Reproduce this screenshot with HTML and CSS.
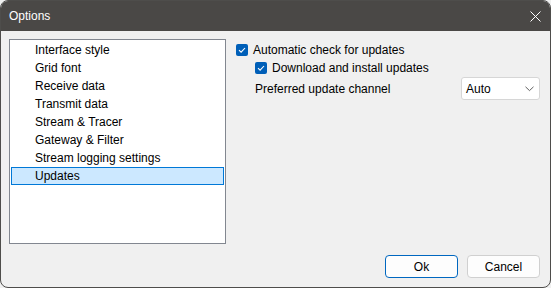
FILE: index.html
```html
<!DOCTYPE html>
<html lang="en">
<head>
  <meta charset="UTF-8" />
  <title>Options</title>
  <link rel="stylesheet" href="styles.css">
</head>
<body>
  <div class="window">
    <div class="titlebar">
      <span class="title">Options</span>
      <svg class="close" width="11" height="11" viewBox="0 0 11 11">
        <path d="M0.5 0.5 L10.5 10.5 M10.5 0.5 L0.5 10.5" stroke="#fff" stroke-width="1" fill="none" />
      </svg>
    </div>

    <div class="body">
      <div class="main">
        <ul class="pages">
          <li>Interface style</li>
          <li>Grid font</li>
          <li>Receive data</li>
          <li>Transmit data</li>
          <li>Stream &amp; Tracer</li>
          <li>Gateway &amp; Filter</li>
          <li>Stream logging settings</li>
          <li class="selected">Updates</li>
        </ul>

        <div class="panel">
          <label class="check">
            <span class="box"><svg width="12" height="12" viewBox="0 0 12 12"><path d="M3 6.2 L5.1 8.2 L9 4" stroke="#fff" stroke-width="1.1" fill="none" /></svg></span>
            Automatic check for updates
          </label>
          <label class="check sub">
            <span class="box"><svg width="12" height="12" viewBox="0 0 12 12"><path d="M3 6.2 L5.1 8.2 L9 4" stroke="#fff" stroke-width="1.1" fill="none" /></svg></span>
            Download and install updates
          </label>
          <div class="channel sub">
            <span>Preferred update channel</span>
            <div class="dropdown">
              <span>Auto</span>
              <svg width="9" height="6" viewBox="0 0 9 6"><path d="M0.5 0.8 L4.5 4.6 L8.5 0.8" stroke="#606060" stroke-width="1" fill="none" /></svg>
            </div>
          </div>
        </div>
      </div>

      <div class="footer">
        <button class="btn default">Ok</button>
        <button class="btn">Cancel</button>
      </div>
    </div>
  </div>
</body>
</html>
```

FILE: styles.css
```css
body {
  margin: 0;
  font-family: 'Liberation Sans', Arial, sans-serif;
  font-size: 12px;
  color: #000;
  background: #f0f0f0;
}

.window {
  width: 551px;
  height: 288px;
  box-sizing: border-box;
  border: 1px solid #4e4d4b;
  border-radius: 8px;
  background: #f0f0f0;
  display: flex;
  flex-direction: column;
  overflow: hidden;
}

.titlebar {
  height: 30px;
  flex: none;
  background: #4a4846;
  color: #fff;
  display: flex;
  align-items: center;
  justify-content: space-between;
  padding: 0 9px 0 8px;
}

.title {
  font-size: 12px;
  padding-bottom: 1px;
}

.body {
  flex: 1;
  display: flex;
  flex-direction: column;
  padding: 8px 10px 9px 8px;
}

.main {
  display: flex;
  gap: 10px;
}

.pages {
  list-style: none;
  margin: 0;
  padding: 1px;
  width: 217px;
  height: 205px;
  box-sizing: border-box;
  background: #fff;
  border: 1px solid #828790;
}

.pages li {
  height: 18px;
  line-height: 17px;
  padding-left: 23px;
  box-sizing: border-box;
  border: 1px solid transparent;
}

.pages li.selected {
  background: #cce8ff;
  border-color: #0078d7;
}

.panel {
  flex: 1;
  padding-top: 2px;
  display: flex;
  flex-direction: column;
}

.check {
  height: 18px;
  display: flex;
  align-items: center;
  gap: 5px;
}

.sub {
  margin-left: 19px;
}

.box {
  width: 12px;
  height: 12px;
  border-radius: 2px;
  background: #005fb8;
  display: flex;
}

.channel {
  display: flex;
  align-items: center;
  justify-content: space-between;
  height: 23px;
}

.dropdown {
  width: 79px;
  height: 23px;
  box-sizing: border-box;
  background: #fff;
  border: 1px solid #d6d6d6;
  border-radius: 3px;
  display: flex;
  align-items: center;
  justify-content: space-between;
  padding: 0 5px 0 4px;
}

.footer {
  margin-top: auto;
  display: flex;
  justify-content: flex-end;
  gap: 9px;
}

.btn {
  width: 73px;
  height: 23px;
  font-family: inherit;
  font-size: 12px;
  background: #fdfdfd;
  border: 1px solid #d0d0d0;
  border-radius: 4px;
  padding: 0;
  color: #000;
}

.btn.default {
  border-color: #0067c0;
}
```
